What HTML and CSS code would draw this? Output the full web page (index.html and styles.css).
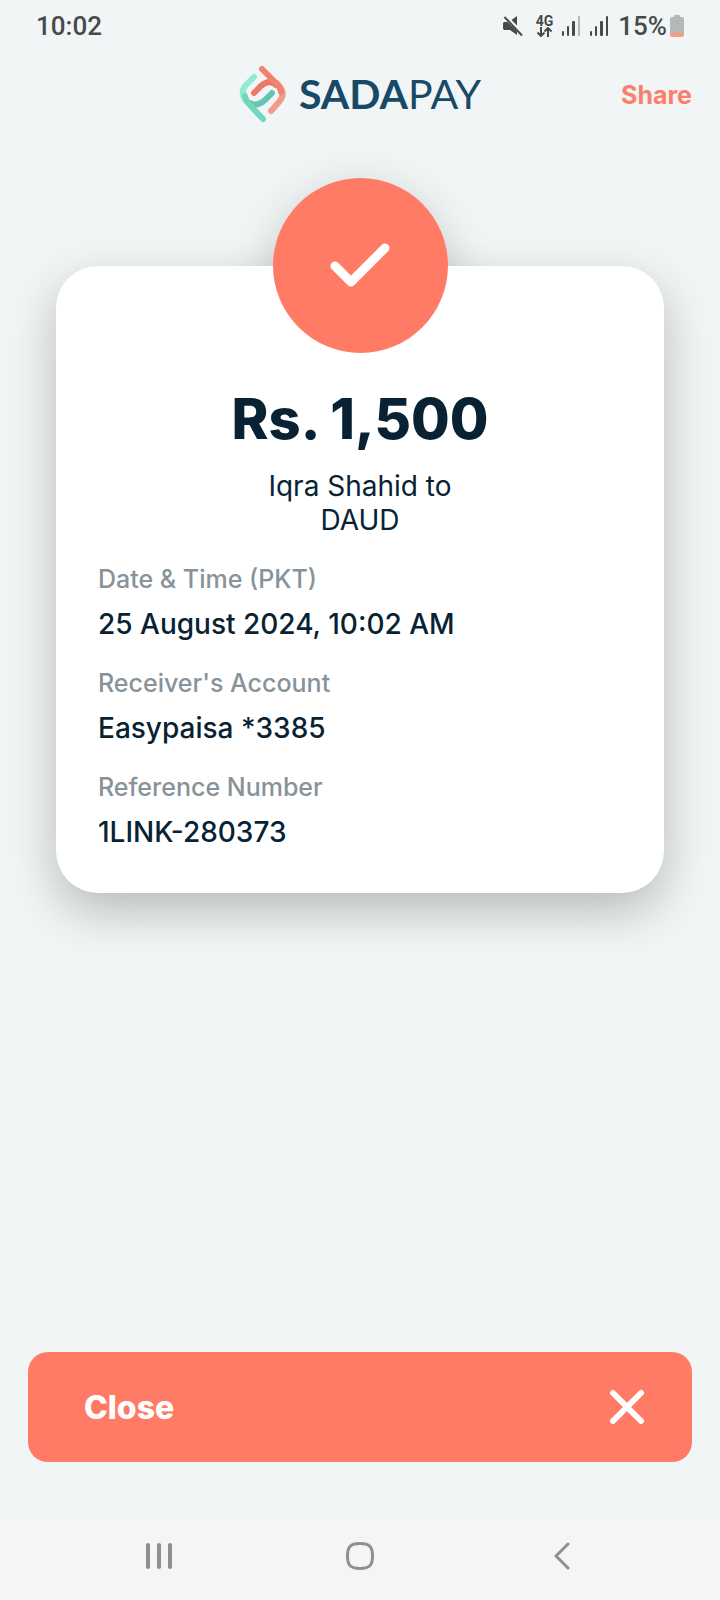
FILE: index.html
```html
<!DOCTYPE html>
<html lang="en">
<head>
<meta charset="utf-8">
<meta name="viewport" content="width=device-width, initial-scale=1">
<title>SadaPay receipt</title>
<link rel="stylesheet" href="styles.css">
</head>
<body class="screen">
  <div class="status">
    <time class="status-text">10:02</time>
    <div class="status-icons">
      <svg width="20" height="22" viewBox="0 0 20 22" fill="#474a4b" aria-hidden="true">
        <path d="M1 7h3.500L14 16.500V20L7 15H1q-1-.5-1-2V8.500Q0 7.500 1 7z"/>
        <path d="M8.500 5 14 1v9.500z"/>
        <path d="M1.500 2 19 20.500" stroke="#474a4b" stroke-width="2"/>
      </svg>
      <div class="network">
        <span class="network-label">4G</span>
        <svg width="15" height="10" viewBox="0 0 15 10" fill="none" stroke="#474a4b" stroke-width="2" aria-hidden="true">
          <path d="M4 0v9M.5 5.500 4 9l3.500-3.500M11 10V1M7.500 4.500 11 1l3.500 3.500"/>
        </svg>
      </div>
      <svg width="19" height="20" viewBox="0 0 19 20" fill="#474a4b" aria-hidden="true">
        <rect y="15" width="2" height="5" rx="1"/><rect x="5" y="10" width="2" height="10" rx="1"/><rect x="10" y="5" width="3" height="15" rx="1"/><rect x="16" width="2" height="20" rx="1" fill="#b3b7b8"/>
      </svg>
      <svg width="19" height="20" viewBox="0 0 19 20" fill="#474a4b" aria-hidden="true">
        <rect y="15" width="2" height="5" rx="1"/><rect x="5" y="10" width="2" height="10" rx="1"/><rect x="10" y="5" width="3" height="15" rx="1"/><rect x="16" width="2" height="20" rx="1"/>
      </svg>
      <span class="status-text battery-text">15%</span>
      <svg width="14" height="22" viewBox="0 0 14 22" aria-hidden="true">
        <path d="M4 2V1q0-1 1-1h4q1 0 1 1v1h2q2 0 2 2v14H0V4q0-2 2-2z" fill="#b3b8b9"/>
        <path d="M0 18h14v2q0 2-2 2H2q-2 0-2-2z" fill="#f69c83"/>
      </svg>
    </div>
  </div>

  <header class="header">
    <div class="brand">
      <svg width="48" height="58" viewBox="0 0 48 58" fill="none" stroke-width="6" stroke-linecap="round" aria-hidden="true">
        <path d="M15 28 22 21Q30 14 37 20" stroke="#ec7866"/>
        <path d="M38 18Q48 28 40 37L32 46" stroke="#f19c88"/>
        <path d="M23 4 38 19Q41 22 42 27" stroke="#ef846e"/>
        <path d="M33 28 26 35Q18 42 11 38" stroke="#67c4b1"/>
        <path d="M15 12 7 20Q0 28 8 37" stroke="#94ead2"/>
        <path d="M6 31Q7 36 10 39L24 54" stroke="#70d7bd"/>
      </svg>
      <span class="wordmark"><b class="wordmark-bold">SADA</b>PAY</span>
    </div>
    <button class="share" type="button">Share</button>
  </header>

  <main class="content">
    <section class="card">
      <div class="badge">
        <svg width="62" height="46" viewBox="0 0 62 46" fill="none" stroke="#fff" stroke-width="9" stroke-linecap="round" stroke-linejoin="round" aria-hidden="true">
          <path d="M6 23 22 39 56 5"/>
        </svg>
      </div>
      <h1 class="amount">Rs. 1,500</h1>
      <p class="parties">Iqra Shahid to<br>DAUD</p>
      <dl class="details">
        <div class="detail"><dt class="label">Date &amp; Time (PKT)</dt><dd class="value">25 August 2024, 10:02 AM</dd></div>
        <div class="detail"><dt class="label">Receiver's Account</dt><dd class="value">Easypaisa *3385</dd></div>
        <div class="detail"><dt class="label">Reference Number</dt><dd class="value">1LINK-280373</dd></div>
      </dl>
    </section>
    <button class="close" type="button">
      <span>Close</span>
      <svg width="36" height="36" viewBox="0 0 36 36" stroke="#fff" stroke-width="6" stroke-linecap="round" aria-hidden="true">
        <path d="M4 4 32 32M32 4 4 32"/>
      </svg>
    </button>
  </main>

  <nav class="system-nav" aria-label="System">
    <button class="nav-button" type="button" aria-label="Recent apps">
      <svg width="26" height="28" viewBox="0 0 26 28" stroke="#8f8f8f" stroke-width="4" stroke-linecap="round"><path d="M2 3V25M13 3V25M24 3V25"/></svg>
    </button>
    <button class="nav-button" type="button" aria-label="Home">
      <svg width="28" height="28" viewBox="0 0 28 28" fill="none" stroke="#8f8f8f" stroke-width="3"><path d="M14 1.500C23.500 1.500 26.500 4.500 26.500 14S23.500 26.500 14 26.500 1.500 23.500 1.500 14 4.500 1.500 14 1.500z"/></svg>
    </button>
    <button class="nav-button" type="button" aria-label="Back">
      <svg width="16" height="28" viewBox="0 0 16 28" fill="none" stroke="#8f8f8f" stroke-width="3" stroke-linecap="round"><path d="M14 2 2 14 14 26"/></svg>
    </button>
  </nav>
</body>
</html>
```

FILE: styles.css
```css
* {
  box-sizing: border-box;
}

.screen {
  display: flex;
  flex-direction: column;
  min-height: 100vh;
  margin: 0;
  background: #f1f5f6;
  color: #082233;
  font-family: Inter, "Liberation Sans", sans-serif;
}

button {
  border: 0;
  padding: 0;
  background: none;
  font: inherit;
  cursor: pointer;
}

svg {
  display: block;
  flex: none;
}

.status {
  display: flex;
  align-items: center;
  justify-content: space-between;
  height: 52px;
  padding: 0 36px;
  color: #474a4b;
  font-family: Roboto, sans-serif;
}

.status-text {
  font-size: 26px;
  font-weight: 500;
  line-height: 32px;
}

.status-icons {
  display: flex;
  align-items: center;
  gap: 9px;
}

.network {
  display: flex;
  flex-direction: column;
  align-items: center;
  margin-left: 4px;
}

.network-label {
  font-size: 14px;
  font-weight: 700;
  line-height: 12px;
}

.battery-text {
  margin-right: -6px;
}

.header {
  display: grid;
  grid-template-columns: 1fr auto 1fr;
  align-items: center;
  height: 84px;
  padding: 0 28px;
}

.brand {
  display: flex;
  grid-column: 2;
  align-items: center;
  gap: 12px;
}

.wordmark {
  color: #174a66;
  font-family: Lato, sans-serif;
  font-size: 41px;
  font-weight: 400;
  line-height: 44px;
}

.wordmark-bold {
  font-weight: 700;
}

.share {
  justify-self: end;
  padding-top: 2px;
  color: #fb7f6b;
  font-size: 25px;
  font-weight: 700;
  line-height: 32px;
}

.content {
  display: flex;
  flex: 1;
  flex-direction: column;
  justify-content: space-between;
  gap: 56px;
  padding: 130px 28px 55px;
}

.card {
  display: flex;
  flex-direction: column;
  margin: 0 28px;
  padding: 0 42px 43px;
  border-radius: 42px;
  background: #fff;
  box-shadow: 0 18px 48px rgba(0, 0, 0, 0.24);
}

.badge {
  position: relative;
  display: grid;
  place-items: center;
  align-self: center;
  width: 175px;
  height: 175px;
  margin-top: -88px;
  border-radius: 50%;
  background: #ff7b66;
}

/* Sits under the card so the badge only casts a shadow on the page. */
.badge::before {
  content: "";
  position: absolute;
  inset: 0;
  z-index: -1;
  border-radius: 50%;
  box-shadow: 0 14px 48px rgba(0, 0, 0, 0.2);
}

.amount {
  margin: 34px 0 0;
  font-size: 56px;
  font-weight: 800;
  line-height: 64px;
  text-align: center;
}

.parties {
  margin: 18px 0 0;
  font-size: 28px;
  line-height: 34px;
  text-align: center;
}

.details {
  display: grid;
  gap: 25px;
  margin: 26px 0 0;
}

.detail {
  display: grid;
  gap: 11px;
}

.label {
  color: #87939b;
  font-size: 25px;
  font-weight: 450;
  line-height: 32px;
}

.value {
  margin: 0;
  font-size: 28px;
  font-weight: 450;
  line-height: 36px;
}

.close {
  display: flex;
  align-items: center;
  justify-content: space-between;
  height: 110px;
  padding: 0 47px 0 56px;
  border-radius: 20px;
  background: #ff7b66;
  color: #fff;
  font-size: 32px;
  font-weight: 800;
}

.system-nav {
  display: grid;
  grid-template-columns: repeat(3, 1fr);
  height: 83px;
  padding: 0 57px 0 58px;
  background: #f5f5f5;
}

.nav-button {
  display: grid;
  place-items: center;
  padding-bottom: 5px;
}
```
